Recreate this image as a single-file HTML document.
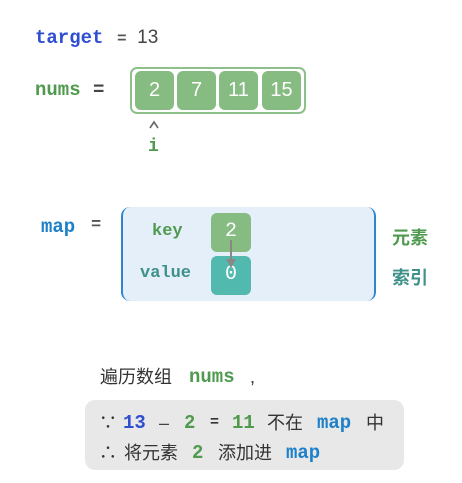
<!DOCTYPE html>
<html><head><meta charset="utf-8"><style>
body{margin:0;width:462px;height:483px;background:#fff;position:relative;overflow:hidden;font-family:"Liberation Sans","Noto Sans CJK SC",sans-serif;}
.a{position:absolute;white-space:nowrap;}
.m{font-family:"Liberation Mono","DejaVu Sans Mono",monospace;font-weight:bold;}
.cell{position:absolute;background:#86bb82;border-radius:6px;color:#fff;font-size:20px;text-align:center;}
.t{position:absolute;white-space:nowrap;font-size:18px;color:#333;line-height:22px;}
</style></head><body>
<div class="a m" style="left:35px;top:27px;font-size:19px;color:#2f4fd0">target</div>
<div class="a" style="left:117px;top:27px;font-size:19px;color:#444"><span class="m" style="color:#555;font-size:16px">=</span>&nbsp; 13</div>
<div class="a m" style="left:35px;top:79px;font-size:19px;color:#4f9a4e">nums</div>
<div class="a m" style="left:93px;top:79px;font-size:19px;color:#444">=</div>
<div class="a" style="left:130px;top:67px;width:172px;height:43px;border:2px solid #8dc08a;border-radius:7px"></div>
<div class="cell" style="left:135px;top:71px;width:39px;height:39px;line-height:39px">2</div>
<div class="cell" style="left:177px;top:71px;width:39px;height:39px;line-height:39px">7</div>
<div class="cell" style="left:219px;top:71px;width:39px;height:39px;line-height:39px">11</div>
<div class="cell" style="left:262px;top:71px;width:39px;height:39px;line-height:39px">15</div>
<svg class="a" style="left:149px;top:120px" width="10" height="10"><path d="M1 8 L5 2 L9 8" fill="none" stroke="#666" stroke-width="1.6"/></svg>
<div class="a m" style="left:148px;top:137px;font-size:18px;color:#4f9a4e">i</div>

<div class="a m" style="left:41px;top:216px;font-size:19px;color:#1d80c8">map</div>
<div class="a m" style="left:91px;top:216px;font-size:17px;color:#555">=</div>
<div class="a" style="left:121px;top:207px;width:251px;height:94px;background:#e4eff9;border-left:2px solid #2f86d0;border-right:2px solid #2f86d0;border-radius:9px"></div>
<div class="a" style="left:131px;top:209px;width:230px;height:92px;background:#e4eff9"></div>
<div class="a m" style="left:152px;top:222px;font-size:17px;color:#4f9a4e">key</div>
<div class="a m" style="left:140px;top:264px;font-size:17px;color:#3e9189">value</div>
<div class="cell" style="left:211px;top:213px;width:40px;height:39px;line-height:37px;font-family:'Liberation Mono',monospace">2</div>
<div class="cell" style="left:211px;top:256px;width:40px;height:39px;line-height:37px;background:#52b9ae;font-family:'Liberation Mono',monospace">0</div>
<svg class="a" style="left:225px;top:240px" width="12" height="30"><path d="M6 0 V22" stroke="#888" stroke-width="2"/><path d="M1 19 L6 28 L11 19Z" fill="#888"/></svg>
<div class="a" style="left:392px;top:224px;font-size:18px;font-weight:bold;color:#4f9a4e">元素</div>
<div class="a" style="left:392px;top:264px;font-size:18px;font-weight:bold;color:#3e9189">索引</div>

<div class="t" style="left:100px;top:366px">遍历数组</div>
<div class="t m" style="left:189px;top:366px;color:#4f9a4e;font-size:19px">nums</div>
<div class="t" style="left:250px;top:366px">,</div>
<div class="a" style="left:85px;top:400px;width:319px;height:70px;background:#e8e8e8;border-radius:10px"></div>
<div class="t" style="left:99px;top:412px">∵</div>
<div class="t m" style="left:123px;top:412px;color:#2f4fd0;font-size:19px">13</div>
<div class="t" style="left:159px;top:412px;color:#444">–</div>
<div class="t m" style="left:184px;top:412px;color:#4f9a4e;font-size:19px">2</div>
<div class="t m" style="left:210px;top:412px;font-size:15px">=</div>
<div class="t m" style="left:232px;top:412px;color:#4f9a4e;font-size:19px">11</div>
<div class="t" style="left:267px;top:412px">不在</div>
<div class="t m" style="left:317px;top:412px;color:#1d80c8;font-size:19px">map</div>
<div class="t" style="left:366px;top:412px">中</div>
<div class="t" style="left:99px;top:442px">∴</div>
<div class="t" style="left:124px;top:442px">将元素</div>
<div class="t m" style="left:192px;top:442px;color:#4f9a4e;font-size:19px">2</div>
<div class="t" style="left:218px;top:442px">添加进</div>
<div class="t m" style="left:286px;top:442px;color:#1d80c8;font-size:19px">map</div>
</body></html>
